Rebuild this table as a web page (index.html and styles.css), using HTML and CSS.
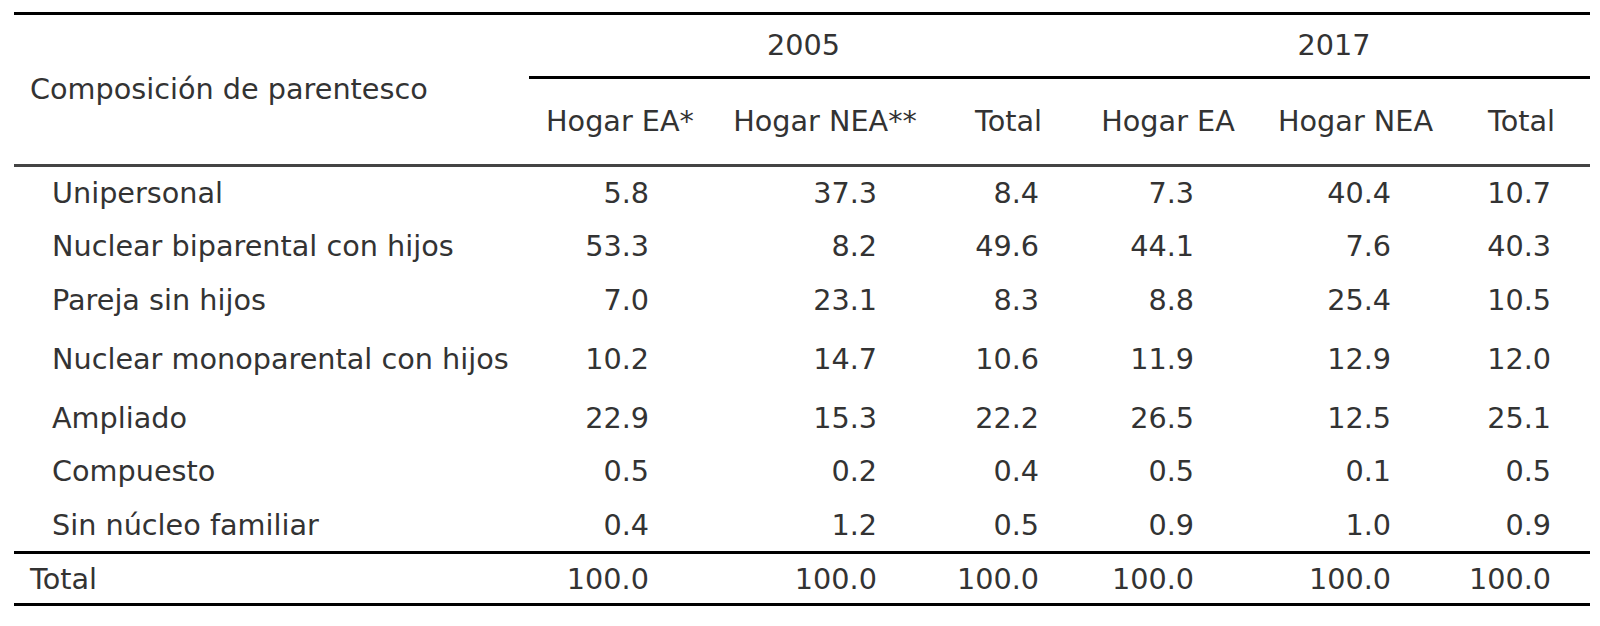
FILE: index.html
```html
<!DOCTYPE html>
<html lang="es">
<head>
<meta charset="utf-8">
<title>Composición de parentesco</title>
<link rel="stylesheet" href="styles.css">
</head>
<body>
<table class="tbl">
  <colgroup>
    <col class="c-stub">
    <col class="c-w182">
    <col class="c-w228">
    <col class="c-w139">
    <col class="c-w180">
    <col class="c-w195">
    <col class="c-w137">
  </colgroup>
  <thead>
    <tr class="spanners">
      <th class="stubhead" rowspan="2">Composición de parentesco</th>
      <th class="spanner" colspan="3">2005</th>
      <th class="spanner" colspan="3">2017</th>
    </tr>
    <tr class="colheads">
      <th class="colhead">Hogar EA*</th>
      <th class="colhead">Hogar NEA**</th>
      <th class="colhead">Total</th>
      <th class="colhead">Hogar EA</th>
      <th class="colhead">Hogar NEA</th>
      <th class="colhead">Total</th>
    </tr>
  </thead>
  <tbody>
    <tr class="row">
      <td class="label">Unipersonal</td>
      <td class="num">5.8</td><td class="num">37.3</td><td class="num tot">8.4</td>
      <td class="num ea17">7.3</td><td class="num">40.4</td><td class="num tot">10.7</td>
    </tr>
    <tr class="row">
      <td class="label">Nuclear biparental con hijos</td>
      <td class="num">53.3</td><td class="num">8.2</td><td class="num tot">49.6</td>
      <td class="num ea17">44.1</td><td class="num">7.6</td><td class="num tot">40.3</td>
    </tr>
    <tr class="row">
      <td class="label">Pareja sin hijos</td>
      <td class="num">7.0</td><td class="num">23.1</td><td class="num tot">8.3</td>
      <td class="num ea17">8.8</td><td class="num">25.4</td><td class="num tot">10.5</td>
    </tr>
    <tr class="row row-tall">
      <td class="label">Nuclear monoparental con hijos</td>
      <td class="num">10.2</td><td class="num">14.7</td><td class="num tot">10.6</td>
      <td class="num ea17">11.9</td><td class="num">12.9</td><td class="num tot">12.0</td>
    </tr>
    <tr class="row">
      <td class="label">Ampliado</td>
      <td class="num">22.9</td><td class="num">15.3</td><td class="num tot">22.2</td>
      <td class="num ea17">26.5</td><td class="num">12.5</td><td class="num tot">25.1</td>
    </tr>
    <tr class="row">
      <td class="label">Compuesto</td>
      <td class="num">0.5</td><td class="num">0.2</td><td class="num tot">0.4</td>
      <td class="num ea17">0.5</td><td class="num">0.1</td><td class="num tot">0.5</td>
    </tr>
    <tr class="row row-last">
      <td class="label">Sin núcleo familiar</td>
      <td class="num">0.4</td><td class="num">1.2</td><td class="num tot">0.5</td>
      <td class="num ea17">0.9</td><td class="num">1.0</td><td class="num tot">0.9</td>
    </tr>
  </tbody>
  <tfoot>
    <tr class="row-total">
      <td class="label-total">Total</td>
      <td class="num">100.0</td><td class="num">100.0</td><td class="num tot">100.0</td>
      <td class="num ea17">100.0</td><td class="num">100.0</td><td class="num tot">100.0</td>
    </tr>
  </tfoot>
</table>
</body>
</html>
```
FILE: styles.css
```css
html, body {
  margin: 0;
  padding: 0;
  background: #ffffff;
}

body {
  padding: 12px 0 0 14px;
  font-family: "DejaVu Sans", "Liberation Sans", sans-serif;
  font-size: 28.7px;
  color: #333333;
}

.tbl {
  width: 1576px;
  table-layout: fixed;
  border-collapse: separate;
  border-spacing: 0;
  font-size: 28.7px;
  color: #333333;
}

.c-stub { width: 515px; }
.c-w182 { width: 182px; }
.c-w228 { width: 228px; }
.c-w139 { width: 139px; }
.c-w180 { width: 180px; }
.c-w195 { width: 195px; }
.c-w137 { width: 137px; }

th, td {
  padding: 0;
  font-weight: normal;
  line-height: 33.2px;
  white-space: nowrap;
}

/* header */
.stubhead {
  text-align: left;
  vertical-align: middle;
  padding-left: 16px;
  border-top: 3px solid #000000;
  border-bottom: 3px solid #444444;
}

.spanner {
  height: 61px;
  text-align: center;
  vertical-align: middle;
  border-top: 3px solid #000000;
  border-bottom: 3px solid #000000;
}

.colhead {
  height: 85px;
  text-align: center;
  vertical-align: middle;
  border-bottom: 3px solid #444444;
}

/* body */
.row td {
  padding-top: 9.5px;
  padding-bottom: 10.9px;
  vertical-align: top;
}

.row.row-tall td {
  padding-top: 15px;
  padding-bottom: 16.4px;
}

.row.row-last td {
  padding-bottom: 8.4px;
  border-bottom: 3px solid #000000;
}

.label {
  text-align: left;
  padding-left: 38px;
}

.num {
  text-align: right;
  padding-right: 62px;
}

.num.ea17 {
  padding-right: 64px;
}

.num.tot {
  padding-right: 39px;
}

/* total row */
.row-total td {
  padding-top: 9px;
  padding-bottom: 7.5px;
  vertical-align: top;
  border-bottom: 3px solid #000000;
}

.row-total .label-total {
  text-align: left;
  padding-left: 16px;
}
```
